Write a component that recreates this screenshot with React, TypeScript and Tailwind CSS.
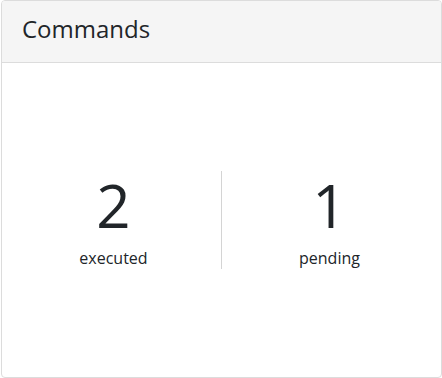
export default function App() {
	const stats = [
		{ value: 2, label: "executed" },
		{ value: 1, label: "pending" },
	];

	return (
		<div
			className="w-[442px] h-[378px] bg-white pl-px"
			style={{ fontFamily: '"Open Sans", sans-serif' }}
		>
			<div className="h-full flex flex-col border border-[#dcdcdc] rounded-[4px] overflow-hidden text-[#212529]">
				<div className="h-[62px] shrink-0 bg-[#f5f5f5] border-b border-[#dcdcdc] flex items-start pt-[13px] px-[20px]">
					<h2 className="text-[24px] leading-[30px]">Commands</h2>
				</div>
				<div className="flex-1 flex items-center pl-[4px] pr-[4px]">
					{stats.map((stat, index) => (
						<div
							key={stat.label}
							className={`flex-1 flex flex-col items-center justify-center h-[98px] ${
								index > 0 ? "border-l border-[#d4d4d4]" : ""
							}`}
						>
							<span className="text-[60px] leading-[60px]">
								{stat.value}
							</span>
							<span className="text-[16px] leading-none mt-[15px]">
								{stat.label}
							</span>
						</div>
					))}
				</div>
			</div>
		</div>
	);
}
